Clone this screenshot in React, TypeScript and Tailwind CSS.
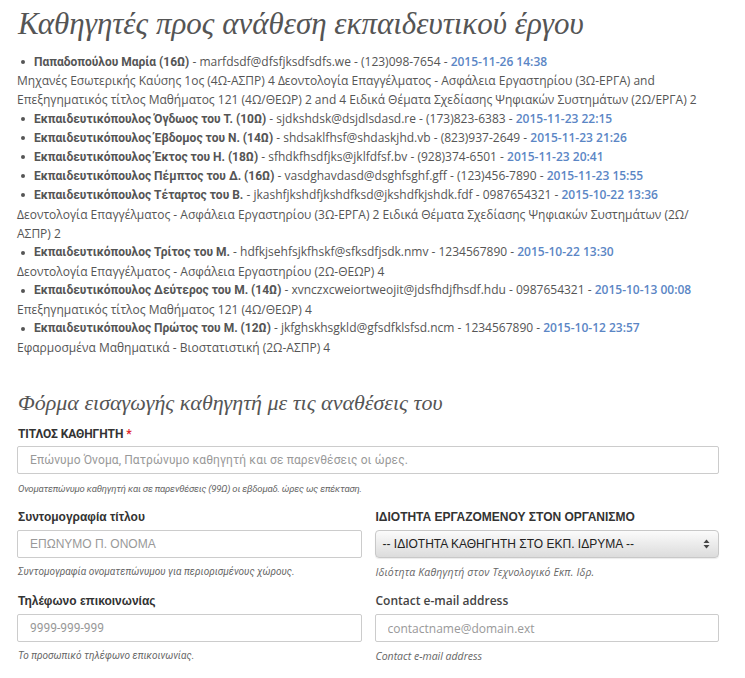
type Teacher = {
  name: string;
  rest: string;
  date: string;
  note?: string;
};

const teachers: Teacher[] = [
  {
    name: 'Παπαδοπούλου Μαρία (16Ω)',
    rest: ' - marfdsdf@dfsfjksdfsdfs.we - (123)098-7654 - ',
    date: '2015-11-26 14:38',
    note: 'Μηχανές Εσωτερικής Καύσης 1ος (4Ω-ΑΣΠΡ) 4 Δεοντολογία Επαγγέλματος - Ασφάλεια Εργαστηρίου (3Ω-ΕΡΓΑ) and Επεξηγηματικός τίτλος Μαθήματος 121 (4Ω/ΘΕΩΡ) 2 and 4 Ειδικά Θέματα Σχεδίασης Ψηφιακών Συστημάτων (2Ω/ΕΡΓΑ) 2',
  },
  {
    name: 'Εκπαιδευτικόπουλος Όγδωος του Τ. (10Ω)',
    rest: ' - sjdkshdsk@dsjdlsdasd.re - (173)823-6383 - ',
    date: '2015-11-23 22:15',
  },
  {
    name: 'Εκπαιδευτικόπουλος Έβδομος του Ν. (14Ω)',
    rest: ' - shdsaklfhsf@shdaskjhd.vb - (823)937-2649 - ',
    date: '2015-11-23 21:26',
  },
  {
    name: 'Εκπαιδευτικόπουλος Έκτος του Η. (18Ω)',
    rest: ' - sfhdkfhsdfjks@jklfdfsf.bv - (928)374-6501 - ',
    date: '2015-11-23 20:41',
  },
  {
    name: 'Εκπαιδευτικόπουλος Πέμπτος του Δ. (16Ω)',
    rest: ' - vasdghavdasd@dsghfsghf.gff - (123)456-7890 - ',
    date: '2015-11-23 15:55',
  },
  {
    name: 'Εκπαιδευτικόπουλος Τέταρτος του Β.',
    rest: ' - jkashfjkshdfjkshdfksd@jkshdfkjshdk.fdf - 0987654321 - ',
    date: '2015-10-22 13:36',
    note: 'Δεοντολογία Επαγγέλματος - Ασφάλεια Εργαστηρίου (3Ω-ΕΡΓΑ) 2 Ειδικά Θέματα Σχεδίασης Ψηφιακών Συστημάτων (2Ω/ ΑΣΠΡ) 2',
  },
  {
    name: 'Εκπαιδευτικόπουλος Τρίτος του Μ.',
    rest: ' - hdfkjsehfsjkfhskf@sfksdfjsdk.nmv - 1234567890 - ',
    date: '2015-10-22 13:30',
    note: 'Δεοντολογία Επαγγέλματος - Ασφάλεια Εργαστηρίου (2Ω-ΘΕΩΡ) 4',
  },
  {
    name: 'Εκπαιδευτικόπουλος Δεύτερος του Μ. (14Ω)',
    rest: ' - xvnczxcweiortweojit@jdsfhdjfhsdf.hdu - 0987654321 - ',
    date: '2015-10-13 00:08',
    note: 'Επεξηγηματικός τίτλος Μαθήματος 121 (4Ω/ΘΕΩΡ) 4',
  },
  {
    name: 'Εκπαιδευτικόπουλος Πρώτος του Μ. (12Ω)',
    rest: ' - jkfghskhsgkld@gfsdfklsfsd.ncm - 1234567890 - ',
    date: '2015-10-12 23:57',
    note: 'Εφαρμοσμένα Μαθηματικά - Βιοστατιστική (2Ω-ΑΣΠΡ) 4',
  },
];

const serif = "font-['Liberation_Serif',serif]";
const open = "font-['Open_Sans',sans-serif]";
const arial = "font-['Liberation_Sans',sans-serif]";
const cond = "font-['Roboto',sans-serif]";

export default function App() {
  return (
    <div className={`min-h-[678px] w-[745px] bg-white pl-[17px] pr-[26px] pt-[4px] text-[#555] ${open}`}>
      <h1 className={`pl-px text-[31px] italic leading-[40px] text-[#555] ${serif}`}>
        Καθηγητές προς ανάθεση εκπαιδευτικού έργου
      </h1>

      {/* list of teachers */}
      <div className="mt-[8px] text-[12px] leading-[19.07px]">
        {teachers.map((t) => (
          <div key={t.name}>
            <div className="flex h-[19.07px] items-center">
              <span className="mt-px h-[4px] w-[4px] shrink-0 rounded-full bg-[#555] ml-[4px] mr-[9px]" />
              <span className="whitespace-nowrap">
                <b className={`font-bold ${cond}`}>{t.name}</b>
                {t.rest}
                <span className="font-semibold text-[#5b86c5]">{t.date}</span>
              </span>
            </div>
            {t.note && <div>{t.note}</div>}
          </div>
        ))}
      </div>

      {/* form */}
      <h2 className={`mt-[31px] pl-px text-[22px] italic leading-[30px] text-[#555] ${serif}`}>
        Φόρμα εισαγωγής καθηγητή με τις αναθέσεις του
      </h2>

      <label className={`mt-[7px] block pl-px text-[12px] font-bold tracking-[-0.1px] text-[#333] ${cond}`}>
        ΤΙΤΛΟΣ ΚΑΘΗΓΗΤΗ <span className="text-[#e0262b]">*</span>
      </label>
      <input
        className={`mt-[3px] block h-[28px] w-full rounded-[2px] border border-[#ccc] px-[12px] text-[12px] tracking-[0.1px] placeholder:text-[#999] ${cond}`}
        placeholder="Επώνυμο Όνομα, Πατρώνυμο καθηγητή και σε παρενθέσεις οι ώρες."
      />
      <p className={`mt-[7px] pl-px text-[9.5px] leading-[16px] italic tracking-[-0.2px] text-[#666] ${cond}`}>
        Ονοματεπώνυμο καθηγητή και σε παρενθέσεις (99Ω) οι εβδομαδ. ώρες ως επέκταση.
      </p>

      <div className="mt-[12px] grid grid-cols-2 gap-x-[13px]">
        <Field
          label="Συντομογραφία τίτλου"
          labelClass={`${arial} font-bold text-[#333]`}
          help="Συντομογραφία ονοματεπώνυμου για περιορισμένους χώρους."
        >
          <input
            className={`block h-[28px] w-full rounded-[2px] border border-[#ccc] px-[12px] text-[12px] placeholder:text-[#999] ${arial}`}
            placeholder="ΕΠΩΝΥΜΟ Π. ΟΝΟΜΑ"
          />
        </Field>
        <Field
          label="ΙΔΙΟΤΗΤΑ ΕΡΓΑΖΟΜΕΝΟΥ ΣΤΟΝ ΟΡΓΑΝΙΣΜΟ"
          labelClass={`${arial} font-bold text-[#333]`}
          help="Ιδιότητα Καθηγητή στον Τεχνολογικό Εκπ. Ιδρ."
          helpClass={`${open} text-[10.5px] tracking-[0.15px]`}
        >
          <div
            className={`flex h-[28px] w-full items-center justify-between rounded-[4px] border border-[#c8c8c8] bg-gradient-to-b from-[#fbfbfb] to-[#dcdcdc] pl-[7px] pr-[7px] text-[12px] text-[#222] shadow-[0_1px_1px_rgba(0,0,0,0.08)] ${arial}`}
          >
            <span>-- ΙΔΙΟΤΗΤΑ ΚΑΘΗΓΗΤΗ ΣΤΟ ΕΚΠ. ΙΔΡΥΜΑ --</span>
            <svg width="7" height="10" viewBox="0 0 7 10" className="mr-[1px]">
              <path d="M3.5 0.5 L6.5 4 L0.5 4 Z" fill="#444" />
              <path d="M3.5 9.5 L6.5 6 L0.5 6 Z" fill="#444" />
            </svg>
          </div>
        </Field>
        <Field
          label="Τηλέφωνο επικοινωνίας"
          labelClass={`${arial} font-bold text-[#333]`}
          help="Το προσωπικό τηλέφωνο επικοινωνίας."
          className="mt-[14px]"
        >
          <input
            className={`block h-[28px] w-full rounded-[2px] border border-[#ccc] px-[12px] text-[12px] placeholder:text-[#999] ${cond}`}
            placeholder="9999-999-999"
          />
        </Field>
        <Field
          label="Contact e-mail address"
          labelClass={`${open} font-semibold text-[#444]`}
          help="Contact e-mail address"
          helpClass={`${open} text-[10.5px]`}
          className="mt-[14px]"
        >
          <input
            className={`block h-[28px] w-full rounded-[2px] border border-[#ccc] px-[12px] text-[12px] placeholder:text-[#999] ${open}`}
            placeholder="contactname@domain.ext"
          />
        </Field>
      </div>
    </div>
  );
}

function Field({
  label,
  labelClass,
  help,
  helpClass = `${cond} text-[10px]`,
  className = '',
  children,
}: {
  label: string;
  labelClass: string;
  help: string;
  helpClass?: string;
  className?: string;
  children: React.ReactNode;
}) {
  return (
    <div className={className}>
      <label className={`block pl-px text-[12px] leading-[16px] ${labelClass}`}>{label}</label>
      <div className="mt-[5px]">{children}</div>
      <p className={`mt-[7px] pl-px italic leading-[14px] text-[#666] ${helpClass}`}>{help}</p>
    </div>
  );
}
